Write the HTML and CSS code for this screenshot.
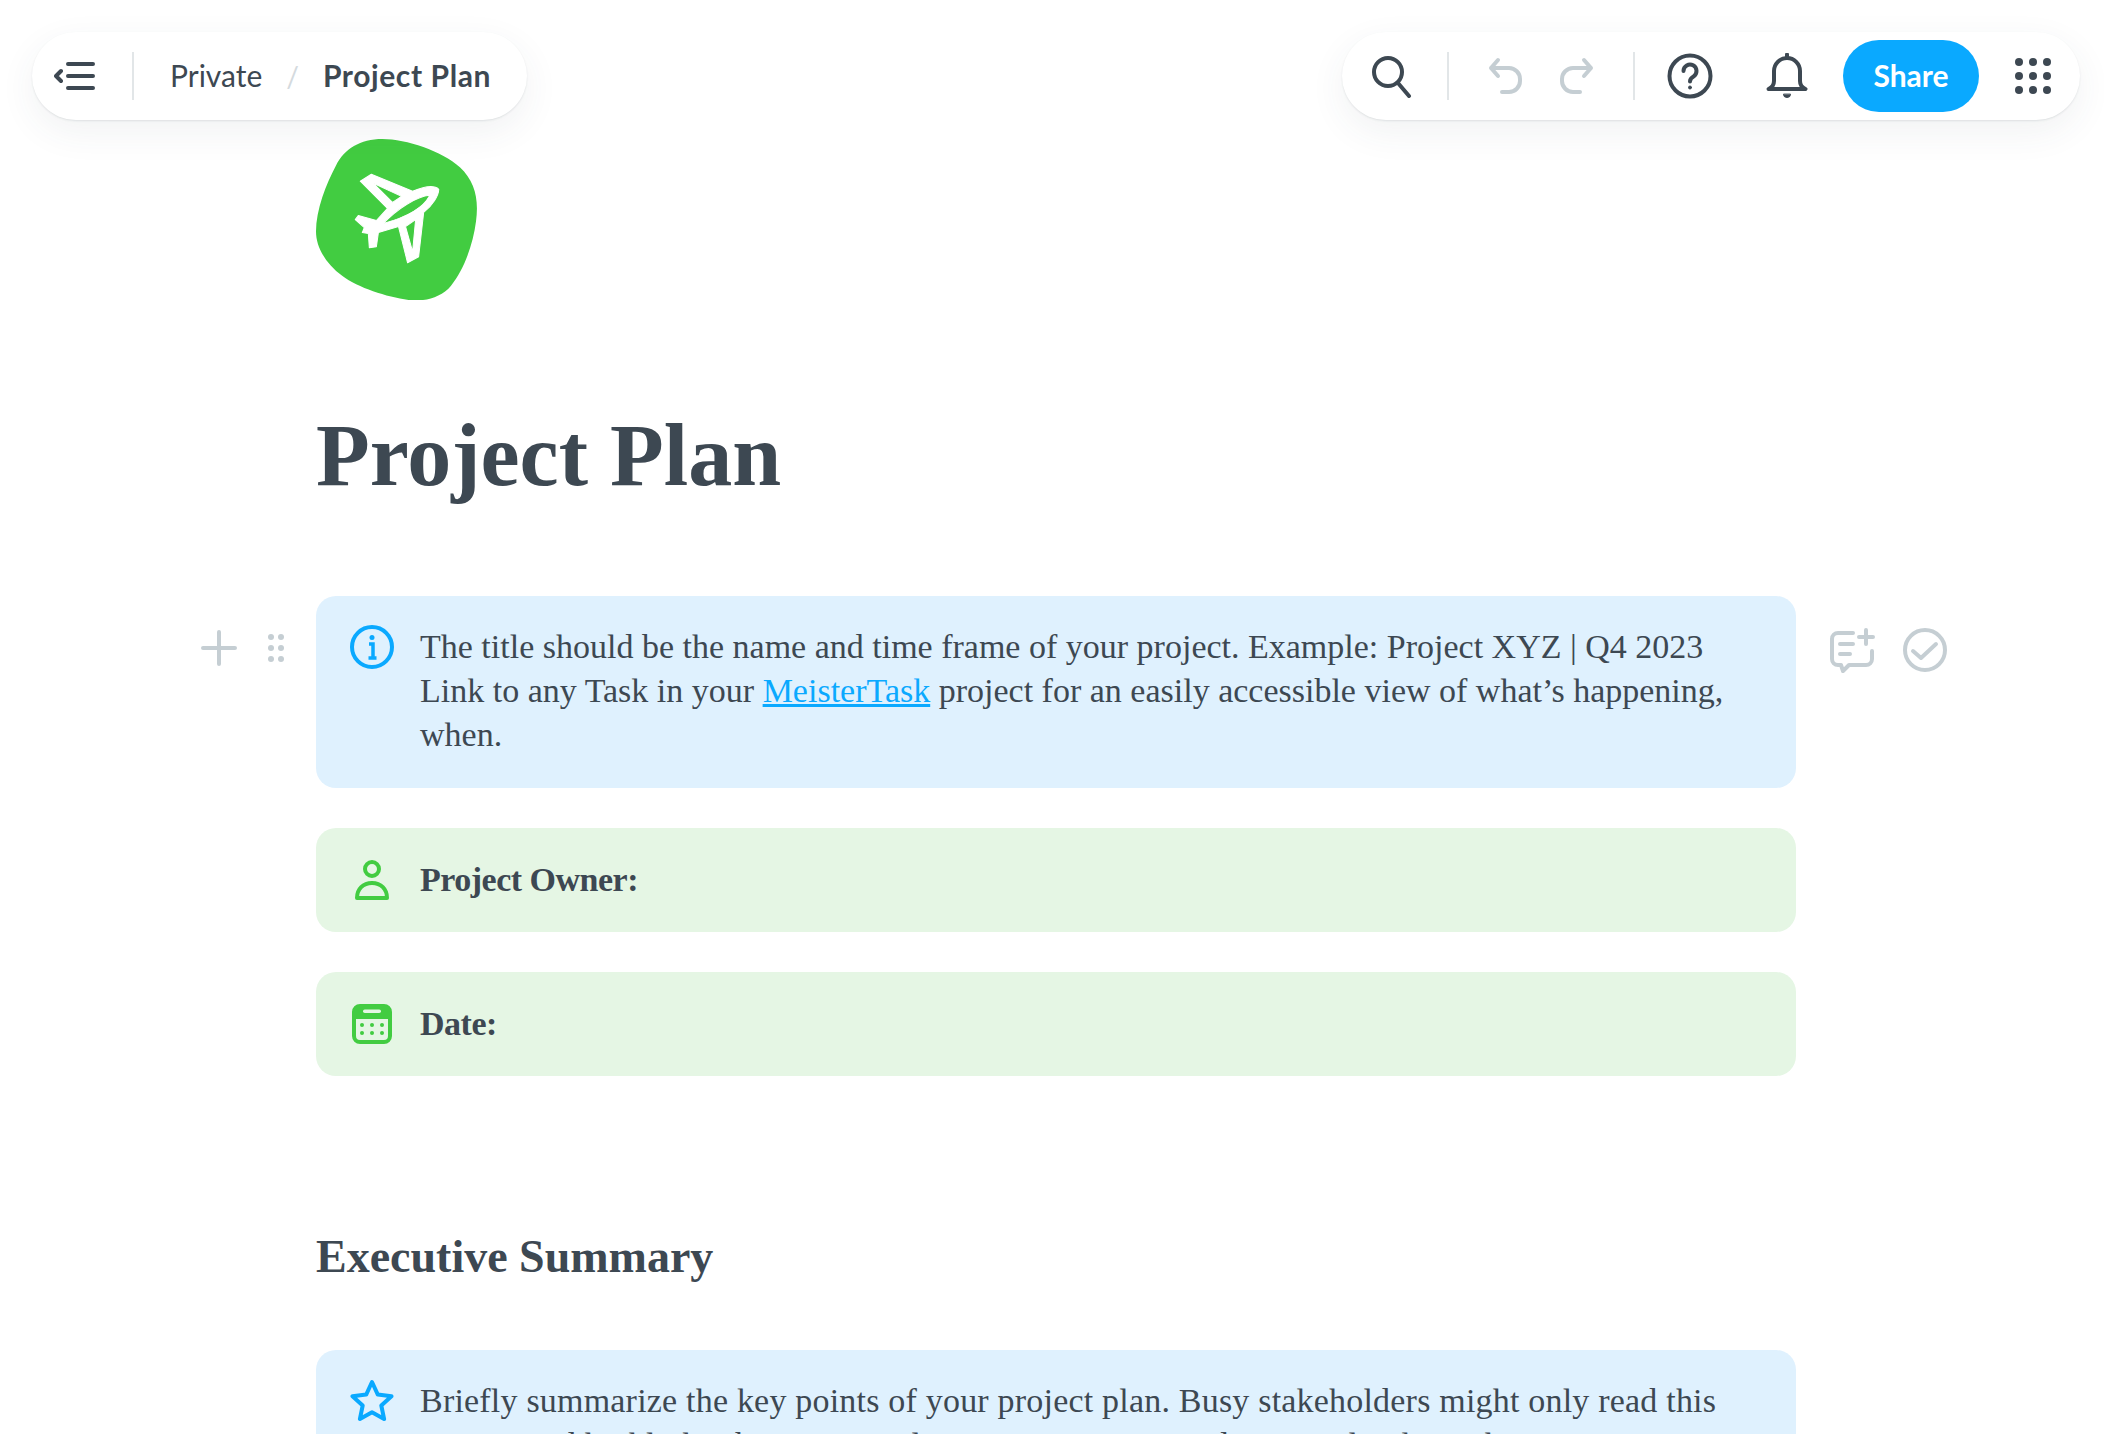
FILE: index.html
```html
<!DOCTYPE html>
<html lang="en">
<head>
    <meta charset="UTF-8">
    <title>Project Plan</title>
    <link rel="stylesheet" href="styles.css">
</head>
<body>
    <header class="topbar">
        <nav class="pill crumbs">
            <svg class="nav-ico" width="44" height="32" viewBox="0 0 44 32" fill="none" stroke="#3d4852" stroke-width="4" stroke-linecap="round" stroke-linejoin="round">
                <path d="M14 4h25M14 16h25M14 28h25M7 11l-5 5 5 5"/>
            </svg>
            <span class="sep"></span>
            <span class="crumb">Private</span>
            <span class="slash">/</span>
            <span class="crumb current">Project Plan</span>
        </nav>
        <div class="pill tools">
            <svg width="44" height="44" viewBox="0 0 44 44" fill="none" stroke="#3d4852" stroke-width="4" stroke-linecap="round">
                <circle cx="18" cy="18" r="14"/><path d="M28 29l11 13"/>
            </svg>
            <span class="sep"></span>
            <div class="undo">
                <svg width="36" height="38" viewBox="0 0 36 38" fill="none" stroke="#c5ced3" stroke-width="4" stroke-linecap="round" stroke-linejoin="round">
                    <path d="M10 3L3 11l7 8M3 11h18a11 11 0 0 1 11 11v2a11 11 0 0 1-11 11h-7"/>
                </svg>
                <svg width="36" height="38" viewBox="0 0 36 38" fill="none" stroke="#c5ced3" stroke-width="4" stroke-linecap="round" stroke-linejoin="round">
                    <path d="M26 3l7 8-7 8M33 11H15A11 11 0 0 0 4 22v2a11 11 0 0 0 11 11h7"/>
                </svg>
            </div>
            <span class="sep"></span>
            <svg class="help" width="46" height="46" viewBox="0 0 46 46" fill="none" stroke="#3d4852" stroke-width="4" stroke-linecap="round">
                <circle cx="23" cy="23" r="20.5"/>
                <path d="M16.500 18a6.500 6.500 0 1 1 10 5.500c-2.500 1.500-3.500 2.500-3.500 5"/>
                <circle cx="23" cy="34.500" r="1.500" fill="#3d4852" stroke-width="1"/>
            </svg>
            <svg class="bell" width="42" height="46" viewBox="0 0 42 46" fill="none" stroke="#3d4852" stroke-width="4" stroke-linecap="round" stroke-linejoin="round">
                <path d="M2.500 36c3.500-1.500 5.500-4 5.500-8V18a13 13 0 0 1 26 0v10c0 4 2 6.500 5.500 8z"/>
                <path d="M21 1.500V5"/>
                <path d="M17.500 41.500a3.500 3 0 0 0 7 0z" fill="#3d4852" stroke-width="1"/>
            </svg>
            <button class="share">Share</button>
            <svg class="apps" width="38" height="38" viewBox="0 0 38 38" fill="#3d4852">
                <circle cx="5" cy="5" r="4"/><circle cx="19" cy="5" r="4"/><circle cx="33" cy="5" r="4"/>
                <circle cx="5" cy="19" r="4"/><circle cx="19" cy="19" r="4"/><circle cx="33" cy="19" r="4"/>
                <circle cx="5" cy="33" r="4"/><circle cx="19" cy="33" r="4"/><circle cx="33" cy="33" r="4"/>
            </svg>
        </div>
    </header>

    <main class="doc">
        <svg class="doc-icon" width="161" height="161" viewBox="0 0 160 160">
            <path d="M66 0C90 0 125 12 143 28c15 14 19 32 16 54-3 23-12 48-25 64-10 12-28 16-42 14-22-3-50-12-66-24C10 124 0 108 0 92 0 70 10 45 20 26 28 10 44 0 66 0z" fill="#42cc41"/>
            <path fill="#fff" fill-rule="evenodd" stroke="#fff" stroke-width="1" stroke-linejoin="round" d="M122 50C118 46 108 47 96 52L55 35 44 42 71 69 60 81 42 76 39 80 48 88 46 93 52 94 53 108 60 107 62 93 82 87 91 123 102 117 107 73C116 66 122 56 122 50zM57 44L85 57 76 63zM113 56C100 57 80 70 67 84 85 79 106 70 113 56zM99 80L96 112 89 87z"/>
        </svg>

        <h1 class="title">Project Plan</h1>

        <div class="block">
            <div class="handle">
                <svg width="36" height="36" viewBox="0 0 36 36" stroke="#c5ced3" stroke-width="4" stroke-linecap="round"><path d="M18 2v32M2 18h32"/></svg>
                <svg width="16" height="28" viewBox="0 0 16 28" fill="#c5ced3">
                    <circle cx="3" cy="3" r="3"/><circle cx="13" cy="3" r="3"/>
                    <circle cx="3" cy="14" r="3"/><circle cx="13" cy="14" r="3"/>
                    <circle cx="3" cy="25" r="3"/><circle cx="13" cy="25" r="3"/>
                </svg>
            </div>
            <div class="callout blue">
                <svg class="callout-ico" width="44" height="44" viewBox="0 0 44 44" fill="none" stroke="#0aa9ff" stroke-width="4">
                    <circle cx="22" cy="22" r="20"/>
                    <circle cx="22" cy="12.500" r="2.500" fill="#0aa9ff" stroke="none"/>
                    <path d="M19 19h4v14M18.500 33h8" stroke-width="3.500"/>
                </svg>
                <p>The title should be the name and time frame of your project. Example: Project XYZ | Q4 2023<br>Link to any Task in your <a href="#">MeisterTask</a> project for an easily accessible view of what’s happening, when.</p>
            </div>
            <div class="actions">
                <svg width="46" height="46" viewBox="0 0 46 46" fill="none" stroke="#c5ced3" stroke-width="4" stroke-linecap="round" stroke-linejoin="round">
                    <path d="M24 6H9a6 6 0 0 0-6 6v20a6 6 0 0 0 6 6h3l2 6 6-6h17a6 6 0 0 0 6-6V24"/>
                    <path d="M11 17h13M11 27h10M37 3v14M30 10h14"/>
                </svg>
                <svg width="44" height="44" viewBox="0 0 44 44" fill="none" stroke="#c5ced3" stroke-width="4" stroke-linecap="round" stroke-linejoin="round">
                    <circle cx="22" cy="22" r="20"/><path d="M10 23l8 7 15-14"/>
                </svg>
            </div>
        </div>

        <div class="callout green">
            <svg class="callout-ico" width="44" height="44" viewBox="-5 -2 44 44" fill="none" stroke="#42cc41" stroke-width="4" stroke-linejoin="round">
                <circle cx="17" cy="9" r="7"/>
                <path d="M2 38c0-9 6-15 15-15s15 6 15 15z"/>
            </svg>
            <p><strong>Project Owner:</strong></p>
        </div>

        <div class="callout green">
            <svg class="callout-ico" width="44" height="44" viewBox="-2 -2 44 44" fill="none" stroke="#42cc41" stroke-width="4">
                <rect x="2" y="2" width="36" height="36" rx="6"/>
                <path d="M2 9.500h36" stroke-width="11"/>
                <rect x="11" y="5.500" width="18" height="3.500" rx="1.750" fill="#e5f6e4" stroke="none"/>
                <g fill="#42cc41" stroke="none">
                    <circle cx="10" cy="21" r="2"/><circle cx="20" cy="21" r="2"/><circle cx="30" cy="21" r="2"/>
                    <circle cx="10" cy="29" r="2"/><circle cx="20" cy="29" r="2"/><circle cx="30" cy="29" r="2"/>
                </g>
            </svg>
            <p><strong>Date:</strong></p>
        </div>

        <h2 class="section">Executive Summary</h2>

        <div class="callout blue summary">
            <svg class="callout-ico" width="44" height="44" viewBox="0 0 44 44" fill="none" stroke="#0aa9ff" stroke-width="4" stroke-linejoin="round">
                <path d="M22 3l5.800 12.600 13.700 1.600-10.200 9.300 2.800 13.500L22 33.200 9.900 40l2.800-13.500L2.500 17.200l13.700-1.600z"/>
            </svg>
            <p>Briefly summarize the key points of your project plan. Busy stakeholders might only read this section and highlight objectives, milestones, resources and potential risks with mitigations.</p>
        </div>
    </main>
</body>
</html>
```

FILE: styles.css
```css
html, body {
    height: 100%;
}

body {
    margin: 0;
    background: #fff;
    color: #3d4852;
    font-family: 'Liberation Serif', serif;
    overflow: hidden;
}

.topbar {
    display: flex;
    justify-content: space-between;
    padding: 32px 24px 0 32px;
    position: absolute;
    top: 0;
    left: 0;
    right: 0;
}

.pill {
    display: flex;
    align-items: center;
    height: 88px;
    background: #fff;
    border-radius: 44px;
    box-shadow: 0 1px 2px rgba(60, 70, 80, 0.12), 0 12px 36px rgba(60, 70, 80, 0.07);
    font-family: 'Lato', sans-serif;
}

.sep {
    width: 2px;
    height: 48px;
    background: #e2e6e8;
}

.crumbs {
    padding: 0 36px 0 22px;
}

.crumbs .sep {
    margin: 0 36px 0 34px;
}

.crumb {
    font-size: 30px;
    padding-bottom: 2px;
}

.crumb.current {
    font-weight: 700;
    letter-spacing: 0.6px;
}

.slash {
    margin: 0 24px;
    font-size: 28px;
    color: #d4dade;
}

.tools {
    padding: 0 28px 0 28px;
}

.tools .sep {
    margin: 0 30px 0 33px;
}

.undo {
    display: flex;
    gap: 34px;
    margin: 0 6px 0 9px;
}

.help {
    margin-left: 2px;
}

.bell {
    margin-left: 53px;
}

.share {
    margin-left: 35px;
    width: 136px;
    height: 72px;
    padding: 0 0 3px;
    border: none;
    border-radius: 36px;
    background: #0aa9ff;
    color: #fff;
    font-family: 'Lato', sans-serif;
    font-size: 30px;
    font-weight: 700;
}

.apps {
    margin-left: 35px;
}

.doc {
    width: 1480px;
    margin-left: 316px;
    padding-top: 139px;
}

.doc-icon {
    display: block;
}

.title {
    margin: 106px 0 90px;
    font-size: 88px;
    line-height: 100px;
    font-weight: 700;
}

.block {
    position: relative;
}

.handle {
    position: absolute;
    top: 34px;
    left: -115px;
    display: flex;
    align-items: center;
    gap: 31px;
}

.actions {
    position: absolute;
    top: 31px;
    right: -151px;
    display: flex;
    align-items: center;
    gap: 28px;
}

.callout {
    display: flex;
    gap: 26px;
    margin-bottom: 40px;
    padding: 29px 40px 31px 34px;
    border-radius: 20px;
}

.callout p {
    margin: 0;
    font-size: 34px;
    line-height: 44px;
}

.callout strong {
    letter-spacing: -0.5px;
}

.callout-ico {
    flex: none;
}

.blue {
    background: #dff1fe;
}

.green {
    background: #e5f6e4;
    padding-top: 30px;
    padding-bottom: 30px;
}

.callout a {
    color: #0aa9ff;
}

.summary p {
    letter-spacing: 0.2px;
}

.section {
    margin: 153px 0 65px;
    font-size: 46px;
    line-height: 56px;
    font-weight: 700;
}
```
